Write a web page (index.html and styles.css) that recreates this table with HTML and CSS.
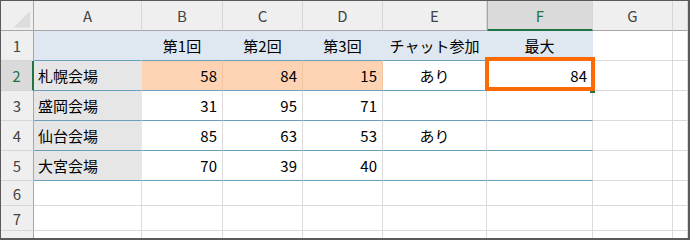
FILE: index.html
```html
<!DOCTYPE html>
<html lang="ja">
  <head>
    <meta charset="UTF-8" />
    <meta name="viewport" content="width=device-width, initial-scale=1.0" />
    <title>会場別 参加者数</title>
    <link rel="stylesheet" href="styles.css">
  </head>
  <body>
    <div class="sheet">
      <!-- column headers -->
      <div class="hd corner">
        <svg width="33" height="29" viewBox="0 0 33 29"><polygon points="30,10 30,27 13,27" fill="#dcdcdc" /></svg>
      </div>
      <div class="hd">A</div>
      <div class="hd">B</div>
      <div class="hd">C</div>
      <div class="hd">D</div>
      <div class="hd">E</div>
      <div class="hd sel">F</div>
      <div class="hd">G</div>
      <div class="hd"></div>

      <!-- row 1 -->
      <div class="rh">1</div>
      <div class="c title"></div>
      <div class="c title mid">第1回</div>
      <div class="c title mid">第2回</div>
      <div class="c title mid">第3回</div>
      <div class="c title mid">チャット参加</div>
      <div class="c title mid">最大</div>
      <div class="c"></div>
      <div class="c"></div>

      <!-- row 2 -->
      <div class="rh sel">2</div>
      <div class="c name">札幌会場</div>
      <div class="c line num hi">58</div>
      <div class="c line num hi">84</div>
      <div class="c line num hi">15</div>
      <div class="c line mid">あり</div>
      <div class="c line num active">84
        <span class="handle"></span>
        <span class="mark"></span>
      </div>
      <div class="c"></div>
      <div class="c"></div>

      <!-- row 3 -->
      <div class="rh">3</div>
      <div class="c name">盛岡会場</div>
      <div class="c line num">31</div>
      <div class="c line num">95</div>
      <div class="c line num">71</div>
      <div class="c line"></div>
      <div class="c line"></div>
      <div class="c"></div>
      <div class="c"></div>

      <!-- row 4 -->
      <div class="rh">4</div>
      <div class="c name">仙台会場</div>
      <div class="c line num">85</div>
      <div class="c line num">63</div>
      <div class="c line num">53</div>
      <div class="c line mid">あり</div>
      <div class="c line"></div>
      <div class="c"></div>
      <div class="c"></div>

      <!-- row 5 -->
      <div class="rh">5</div>
      <div class="c name">大宮会場</div>
      <div class="c line num">70</div>
      <div class="c line num">39</div>
      <div class="c line num">40</div>
      <div class="c line"></div>
      <div class="c line"></div>
      <div class="c"></div>
      <div class="c"></div>

      <!-- empty rows -->
      <div class="rh">6</div>
      <div class="c"></div><div class="c"></div><div class="c"></div><div class="c"></div>
      <div class="c"></div><div class="c"></div><div class="c"></div><div class="c"></div>

      <div class="rh">7</div>
      <div class="c"></div><div class="c"></div><div class="c"></div><div class="c"></div>
      <div class="c"></div><div class="c"></div><div class="c"></div><div class="c"></div>

      <div class="rh">8</div>
      <div class="c"></div><div class="c"></div><div class="c"></div><div class="c"></div>
      <div class="c"></div><div class="c"></div><div class="c"></div><div class="c"></div>
    </div>
  </body>
</html>
```

FILE: styles.css
```css
body {
  margin: 0;
  padding: 0;
  font-family: "Noto Sans CJK JP", "Noto Sans", sans-serif;
  font-size: 15px;
  color: #000;
}

.sheet {
  box-sizing: border-box;
  width: 690px;
  height: 240px;
  overflow: hidden;
  border-style: solid;
  border-color: #5a5a5a;
  border-width: 1px 2px 2px 1px;
  display: grid;
  grid-template-columns: 33px 108px 81px 80px 80px 104px 106px 80px 1fr;
  grid-template-rows: 30px 30px 30px 30px 30px 30px 25px 25px 25px;
  background-color: #fff;
}

.sheet > div {
  box-sizing: border-box;
  display: flex;
  align-items: center;
  line-height: 1;
  white-space: nowrap;
}

/* headers */
.hd {
  justify-content: center;
  background-color: #efefef;
  color: #444;
  border-right: 1px solid #d6d6d6;
  border-bottom: 1px solid #a6a6a6;
}

.corner {
  border-right-color: #a6a6a6;
}

.rh {
  justify-content: center;
  background-color: #efefef;
  color: #444;
  border-right: 1px solid #a6a6a6;
  border-bottom: 1px solid #d6d6d6;
}

.hd.sel {
  background-color: #dadada;
  color: #217346;
  border-left: 1px solid #a6a6a6;
  border-bottom: 2px solid #217346;
}

.rh.sel {
  background-color: #dadada;
  color: #217346;
  border-right: 2px solid #217346;
}

/* cells */
.c {
  border-right: 1px solid #dadada;
  border-bottom: 1px solid #dadada;
  padding: 0 5px;
}

.title {
  background-color: #dfe8f0;
  border-right-color: #dfe8f0;
  border-bottom-color: #6a9fbd;
}

.name {
  background-color: #e7e6e6;
  border-right-color: #e7e6e6;
  border-bottom-color: #6a9fbd;
  padding-left: 4px;
}

.line {
  border-bottom-color: #6a9fbd;
}

.num {
  justify-content: flex-end;
}

.mid {
  justify-content: center;
}

.hi {
  background-color: #fdd3b4;
  border-right-color: #f2c5a3;
}

.active {
  position: relative;
}

.handle {
  position: absolute;
  right: -3px;
  bottom: -3px;
  width: 5px;
  height: 5px;
  background-color: #217346;
  z-index: 1;
}

.mark {
  position: absolute;
  left: -2px;
  top: -4px;
  right: -3px;
  bottom: -1px;
  border: 4px solid #fd6a02;
  z-index: 2;
}
```
